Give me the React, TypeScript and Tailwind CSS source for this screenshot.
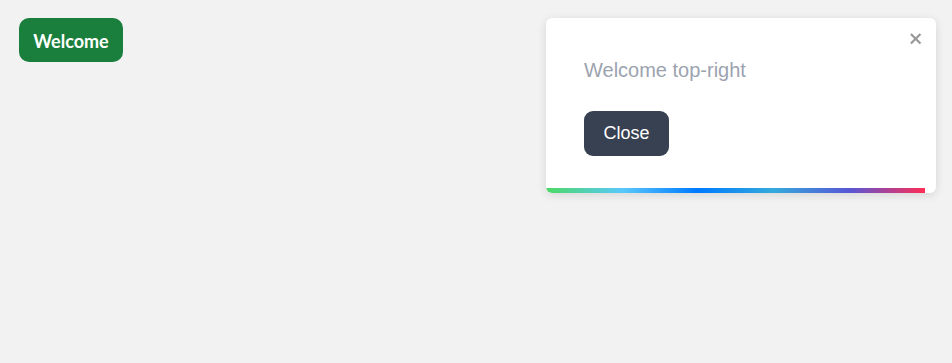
export default function App() {
  return (
    <div className="relative min-h-screen bg-[#f2f2f2] pl-[19px] pt-[18px]">
      {/* trigger */}
      <button className="h-[44px] w-[104px] rounded-[10px] bg-[#1a7f3d] pt-[2px] text-[18px] font-bold text-white font-['Lato',sans-serif]">
        Welcome
      </button>

      {/* toast */}
      <div className="absolute top-[18px] right-[16px] h-[175px] w-[390px] overflow-hidden rounded-[6px] bg-white shadow-[0_2px_10px_rgba(0,0,0,0.12)] font-['Liberation_Sans',Arial,sans-serif]">
        <button className="absolute top-[12px] right-[12px] text-black opacity-40">
          <svg width="15" height="17" viewBox="0 0 14 16" fill="currentColor">
            <path d="M7.71 8.23l3.75 3.75-1.48 1.48-3.75-3.75-3.75 3.75L1 11.98l3.75-3.75L1 4.48 2.48 3l3.75 3.75L9.98 3l1.48 1.48-3.75 3.75z" />
          </svg>
        </button>
        <div className="pl-[38px] pt-[38px]">
          <p className="text-[20px] leading-[28px] text-[#9ca3af]">Welcome top-right</p>
          <button className="mt-[27px] flex h-[45px] items-center rounded-[9px] bg-[#374151] px-[19.5px] text-[18px] text-white">
            Close
          </button>
        </div>
        <div className="absolute bottom-0 left-0 h-[5px] w-[379px] rounded-bl-[6px] bg-[linear-gradient(to_right,#4cd964,#5ac8fa,#007aff,#34aadc,#5856d6,#ff2d55)]" />
      </div>
    </div>
  );
}
